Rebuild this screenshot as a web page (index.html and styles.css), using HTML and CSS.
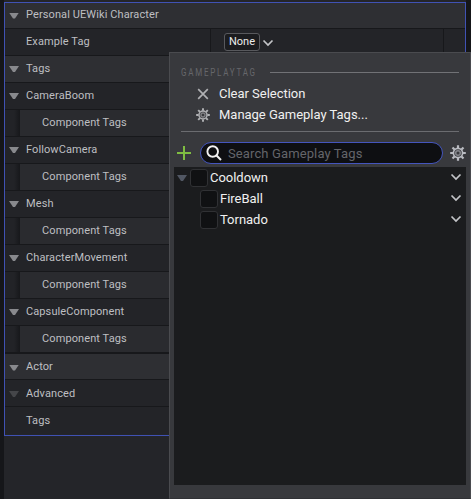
FILE: index.html
```html
<!DOCTYPE html>
<html lang="en">
<head>
<meta charset="utf-8">
<title>Details</title>
<link rel="stylesheet" href="styles.css">
</head>
<body>
<svg class="defs" width="0" height="0">
  <symbol id="chev" viewBox="0 0 12 8"><path d="M1.500 1.500 6 6l4.500-4.500" fill="none" stroke="currentColor" stroke-width="1.700"/></symbol>
  <symbol id="gear" viewBox="0 0 16 16">
    <g stroke="currentColor" fill="none">
      <circle cx="8" cy="8" r="4.600" stroke-width="1.700"/>
      <circle cx="8" cy="8" r="2.300" stroke-width="1.500" opacity=".6"/>
      <path stroke-width="2.200" d="M8 .2V3M8 13v2.800M.2 8H3M13 8h2.800M2.500 2.500l2 2M11.500 11.500l2 2M2.500 13.500l2-2M11.500 4.500l2-2"/>
    </g>
  </symbol>
</svg>
<main class="details">
  <div class="row category first"><i class="arrow"></i><span>Personal UEWiki Character</span></div>
  <div class="row property"><span class="name">Example Tag</span><div class="value"><span class="chip">None</span><svg class="chev"><use href="#chev"/></svg></div><span class="reset"></span></div>
  <div class="row category"><i class="arrow"></i><span>Tags</span></div>
  <div class="row"><i class="arrow"></i><span>CameraBoom</span></div>
  <div class="row child"><span>Component Tags</span></div>
  <div class="row"><i class="arrow"></i><span>FollowCamera</span></div>
  <div class="row child"><span>Component Tags</span></div>
  <div class="row"><i class="arrow"></i><span>Mesh</span></div>
  <div class="row child"><span>Component Tags</span></div>
  <div class="row"><i class="arrow"></i><span>CharacterMovement</span></div>
  <div class="row child"><span>Component Tags</span></div>
  <div class="row"><i class="arrow"></i><span>CapsuleComponent</span></div>
  <div class="row child last-child"><span>Component Tags</span></div>
  <div class="row category low"><i class="arrow"></i><span>Actor</span></div>
  <div class="row low"><i class="arrow dim"></i><span>Advanced</span></div>
  <div class="row plain low"><span>Tags</span></div>
</main>
<section class="menu">
  <header class="heading"><span class="title">GAMEPLAYTAG</span><i class="rule"></i></header>
  <div class="item"><svg class="icon" viewBox="0 0 16 16"><path d="M2.500 2.500l11 11M13.500 2.500l-11 11" stroke="currentColor" stroke-width="1.900"/></svg><span>Clear Selection</span></div>
  <div class="item manage"><svg class="icon"><use href="#gear"/></svg><span>Manage Gameplay Tags...</span></div>
  <i class="divider"></i>
  <div class="tools">
    <svg class="plus" viewBox="0 0 14 14"><path d="M7 0v14M0 7h14" stroke="currentColor" stroke-width="2"/></svg>
    <div class="search"><svg class="lens" viewBox="0 0 16 16"><circle cx="6.700" cy="6.500" r="5.300" fill="none" stroke="currentColor" stroke-width="1.900"/><path d="M10.300 10.200 15 15" stroke="currentColor" stroke-width="2"/></svg><span>Search Gameplay Tags</span></div>
    <svg class="gear"><use href="#gear"/></svg>
  </div>
  <div class="tree">
    <div class="tag"><i class="arrow blue"></i><i class="check"></i><span>Cooldown</span><svg class="chev"><use href="#chev"/></svg></div>
    <div class="tag nested"><i class="check"></i><span>FireBall</span><svg class="chev"><use href="#chev"/></svg></div>
    <div class="tag nested"><i class="check"></i><span>Tornado</span><svg class="chev"><use href="#chev"/></svg></div>
  </div>
</section>
</body>
</html>
```
FILE: styles.css
```css
* { box-sizing: border-box; }
body {
  margin: 0;
  width: 471px;
  height: 499px;
  overflow: hidden;
  position: relative;
  padding: 2px 5px 0 4px;
  background: linear-gradient(90deg, #151619 4px, #242529 4px, #242529 466px, #151619 466px);
  font-family: Roboto, sans-serif;
  font-size: 11px;
  letter-spacing: .1px;
  color: #bebfc2;
}
.defs { position: absolute; }
.details {
  height: 434px;
  border: 1px solid #4052b4;
}
.row {
  display: flex;
  align-items: center;
  height: 27px;
  padding: 0 0 2px 4px;
  border-bottom: 1px solid #17181b;
  background: #232428;
  white-space: nowrap;
}
.row.first { height: 26px; }
.row.category { background: #2e2f33; }
.row.low { padding-bottom: 0; }
.arrow {
  flex: none;
  width: 10px;
  height: 6px;
  margin: 2px 7px 0 0;
  background: #88898d;
  clip-path: polygon(0 0, 100% 0, 60% 100%, 40% 100%);
}
.arrow.dim { background: #45464a; }
.row.property { padding: 0 0 0 21px; align-items: stretch; }
.name { width: 185px; line-height: 25px; border-right: 1px solid #17181b; }
.value { flex: 1; display: flex; align-items: center; padding-left: 13px; }
.chip {
  width: 36px;
  height: 18px;
  border: 1px solid #58595d;
  border-radius: 3px;
  background: #1b1c1f;
  color: #ececec;
  line-height: 16px;
  text-align: center;
  letter-spacing: 0;
}
.chev { width: 12px; height: 8px; color: #c3c4c8; }
.value .chev { margin: 1px 0 0 2px; }
.reset { width: 22px; border-left: 1px solid #17181b; }
.row.child {
  padding-left: 37px;
  background: linear-gradient(90deg, #222327 9px, #17181b 15px, #2a2b2f 15px);
}
.row.last-child { border-bottom-width: 2px; height: 28px; }
.row.last-child + .row { height: 26px; }
.row.plain { padding-left: 21px; border: 0; }
.menu {
  position: absolute;
  left: 169px;
  top: 52px;
  width: 302px;
  height: 447px;
  padding: 11px 4px 0;
  border: 1px solid #4a4b4f;
  border-bottom-color: #303135;
  background: #38393d;
  color: #f0f0f0;
  font-size: 13px;
  letter-spacing: -.02px;
}
.heading {
  display: flex;
  align-items: center;
  height: 17px;
  padding: 0 7px;
}
.title {
  width: 77px;
  color: #66676b;
  font-size: 10px;
  letter-spacing: 2.200px;
  transform: scaleX(.8);
  transform-origin: left;
}
.rule { flex: 1; height: 1px; margin-left: 12px; background: #717276; }
.item {
  display: flex;
  align-items: center;
  height: 21px;
  margin-top: 2px;
  padding-left: 22px;
}
.item.manage { margin-top: 0; }
.icon { width: 14px; height: 14px; margin: 0 8px 0 0; color: #b0b1b4; }
.item span { margin-left: 1px; }
.divider { display: block; height: 1px; margin: 6px 7px 0; background: #6b6c70; }
.tools { display: flex; align-items: center; height: 35px; padding: 7px 0 0 3px; }
.plus { width: 14px; height: 14px; color: #7fbd42; margin-right: 9px; }
.search {
  display: flex;
  align-items: center;
  width: 243px;
  height: 22px;
  padding-left: 5px;
  border: 1px solid #4455bd;
  border-radius: 11px;
  background: #0e0f12;
  color: #64656a;
  letter-spacing: .12px;
}
.lens { width: 16px; height: 16px; margin-right: 6px; color: #f2f2f2; }
.gear { width: 16px; height: 16px; margin-left: 7px; color: #b9bbc1; flex: none; }
.tree { width: 292px; height: 318px; background: #1b1c1e; }
.tag { display: flex; align-items: center; height: 21px; padding-left: 3px; }
.tag.nested { padding-left: 26px; }
.arrow.blue { background: #515763; margin: 1px 3px 0 0; }
.check {
  width: 18px;
  height: 18px;
  margin-right: 2px;
  border: 1px solid #303134;
  border-radius: 3px;
  background: #101113;
}
.tag .chev { margin: 0 4px 2px auto; }
```
